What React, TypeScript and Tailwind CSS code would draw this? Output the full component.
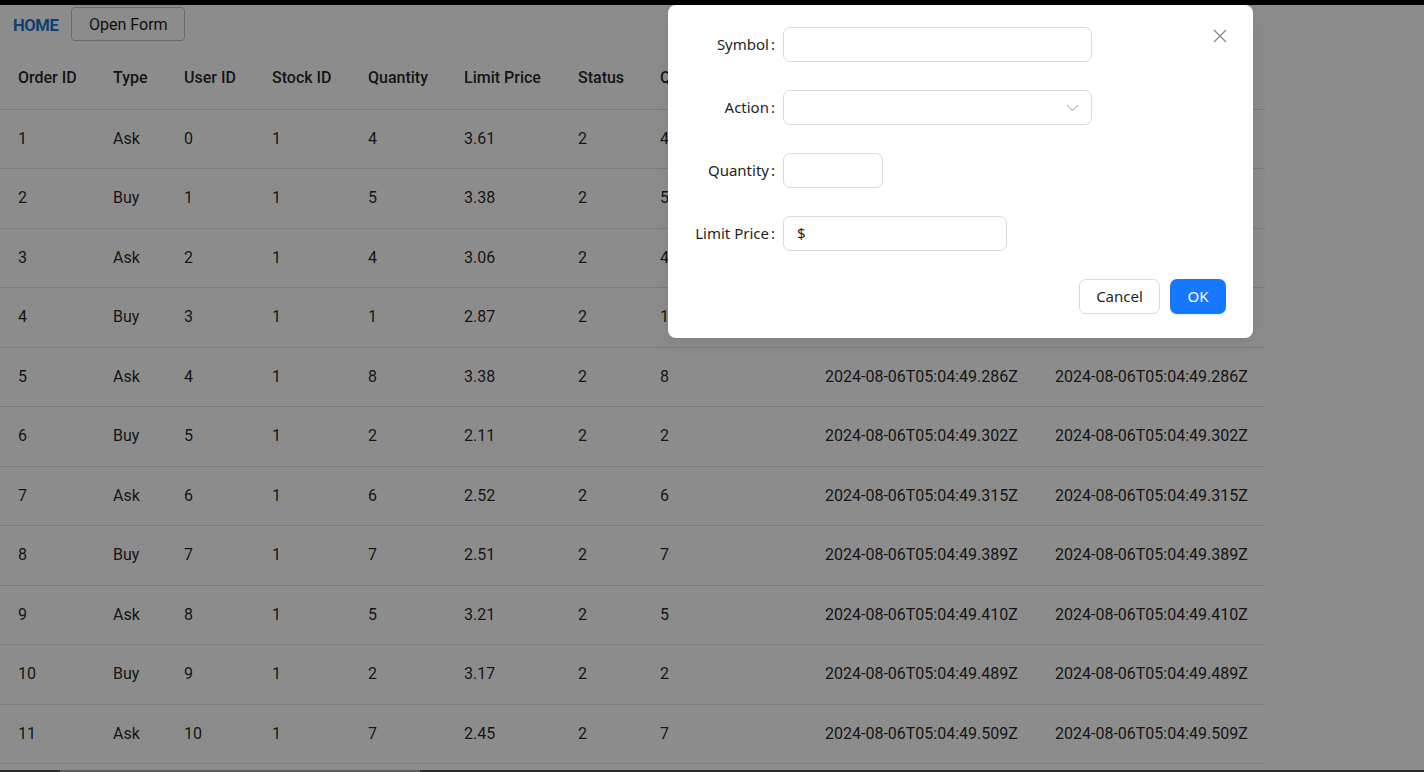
import React from "react"

type Order = {
  id: number
  type: string
  user: number
  stock: number
  qty: number
  price: string
  status: number
  filled: number
  ts: string
}

const stamps = ["201", "230", "251", "270", "286", "302", "315", "389", "410", "489", "509"]
const prices = ["3.61", "3.38", "3.06", "2.87", "3.38", "2.11", "2.52", "2.51", "3.21", "3.17", "2.45"]
const qtys = [4, 5, 4, 1, 8, 2, 6, 7, 5, 2, 7]

const orders: Order[] = stamps.map((s, i) => ({
  id: i + 1,
  type: i % 2 === 0 ? "Ask" : "Buy",
  user: i,
  stock: 1,
  qty: qtys[i],
  price: prices[i],
  status: 2,
  filled: qtys[i],
  ts: `2024-08-06T05:04:49.${s}Z`,
}))

const columns = [
  { label: "Order ID", w: "w-[95px]" },
  { label: "Type", w: "w-[71px]" },
  { label: "User ID", w: "w-[88px]" },
  { label: "Stock ID", w: "w-[96px]" },
  { label: "Quantity", w: "w-[96px]" },
  { label: "Limit Price", w: "w-[114px]" },
  { label: "Status", w: "w-[82px]" },
  { label: "Quantity Filled", w: "w-[165px]" },
  { label: "Created At", w: "w-[230px]" },
  { label: "Updated At", w: "w-[228px]" },
]

function FormRow({ label, children }: { label: string; children: React.ReactNode }) {
  return (
    <div className="flex h-[35px] items-center">
      <div className="w-[91px] shrink-0 pr-[8px] text-right text-[15px] text-[#1f1f1f]">
        {label}
        <span className="ml-[2px]">:</span>
      </div>
      {children}
    </div>
  )
}

export default function App() {
  return (
    <div className="relative h-[772px] w-[1424px] overflow-hidden bg-white font-['Roboto',sans-serif]">
      <div className="h-[5px] bg-black" />

      {/* nav */}
      <div className="flex h-[40px] items-start gap-[13px] pl-[13px] pt-[2px]">
        <span className="mt-[7px] text-[16.6px] font-bold tracking-tight text-[#1976d2]">HOME</span>
        <button className="h-[34px] w-[114px] rounded-[4px] border border-[#c4c4c4] pt-[2px] text-[16px] text-[#1a1a1a]">
          Open Form
        </button>
      </div>

      {/* table */}
      <table className="w-[1265px] table-fixed border-collapse text-left text-[16px] text-[rgba(0,0,0,0.87)]">
        <thead>
          <tr className="h-[64px] border-b border-[#e0e0e0]">
            {columns.map((c) => (
              <th key={c.label} className={`${c.w} whitespace-nowrap pl-[18px] pt-[3px] font-medium`}>
                {c.label}
              </th>
            ))}
          </tr>
        </thead>
        <tbody>
          {orders.map((o) => (
            <tr key={o.id} className="h-[59.5px] border-b border-[#e0e0e0]">
              <td className="pl-[18px]">{o.id}</td>
              <td className="pl-[18px]">{o.type}</td>
              <td className="pl-[18px]">{o.user}</td>
              <td className="pl-[18px]">{o.stock}</td>
              <td className="pl-[18px]">{o.qty}</td>
              <td className="pl-[18px]">{o.price}</td>
              <td className="pl-[18px]">{o.status}</td>
              <td className="pl-[18px]">{o.filled}</td>
              <td className="whitespace-nowrap pl-[18px]">{o.ts}</td>
              <td className="whitespace-nowrap pl-[18px]">{o.ts}</td>
            </tr>
          ))}
        </tbody>
      </table>

      {/* mask */}
      <div className="absolute inset-0 bg-black/45" />

      {/* modal */}
      <div className="absolute left-[668px] top-[5px] flex h-[333px] w-[585px] flex-col rounded-[8px] bg-white pl-[24px] pr-[27px] pt-[22px] font-['Noto_Sans','Open_Sans',sans-serif] shadow-[0_6px_16px_rgba(0,0,0,0.08)]">
        <button className="absolute right-[19px] top-[17px] flex h-[28px] w-[28px] items-center justify-center text-[#8c8c8c]">
          <svg width="16" height="16" viewBox="0 0 16 16" fill="none" stroke="currentColor" strokeWidth="1.4">
            <path d="M2 2 L14 14 M14 2 L2 14" />
          </svg>
        </button>

        <div className="flex flex-col gap-[28px]">
          <FormRow label="Symbol">
            <div className="h-[35px] w-[309px] rounded-[7px] border border-[#d9d9d9]" />
          </FormRow>
          <FormRow label="Action">
            <div className="flex h-[35px] w-[309px] items-center justify-end rounded-[7px] border border-[#d9d9d9] pr-[12px]">
              <svg width="13" height="8" viewBox="0 0 13 8" fill="none" stroke="#bfbfbf" strokeWidth="1.2">
                <path d="M1 1 L6.5 6.5 L12 1" />
              </svg>
            </div>
          </FormRow>
          <FormRow label="Quantity">
            <div className="h-[35px] w-[100px] rounded-[7px] border border-[#d9d9d9]" />
          </FormRow>
          <FormRow label="Limit Price">
            <div className="flex h-[35px] w-[224px] items-center rounded-[7px] border border-[#d9d9d9] pl-[13px] text-[15px] text-[#1f1f1f]">
              $
            </div>
          </FormRow>
        </div>

        <div className="mt-[28px] flex justify-end gap-[10px]">
          <button className="h-[35px] w-[81px] rounded-[7px] border border-[#d9d9d9] bg-white text-[15px] text-[#1f1f1f]">
            Cancel
          </button>
          <button className="h-[35px] w-[56px] rounded-[7px] bg-[#1677ff] text-[15px] text-white shadow-[0_2px_0_rgba(5,145,255,0.1)]">
            OK
          </button>
        </div>
      </div>

      {/* scrollbar strip */}
      <div className="absolute bottom-0 left-0 flex h-[2px] w-full">
        <div className="w-[60px] bg-[#2a2a2a]" />
        <div className="w-[360px] bg-[#5c5c5c]" />
        <div className="flex-1 bg-[#2a2a2a]" />
      </div>
    </div>
  )
}
